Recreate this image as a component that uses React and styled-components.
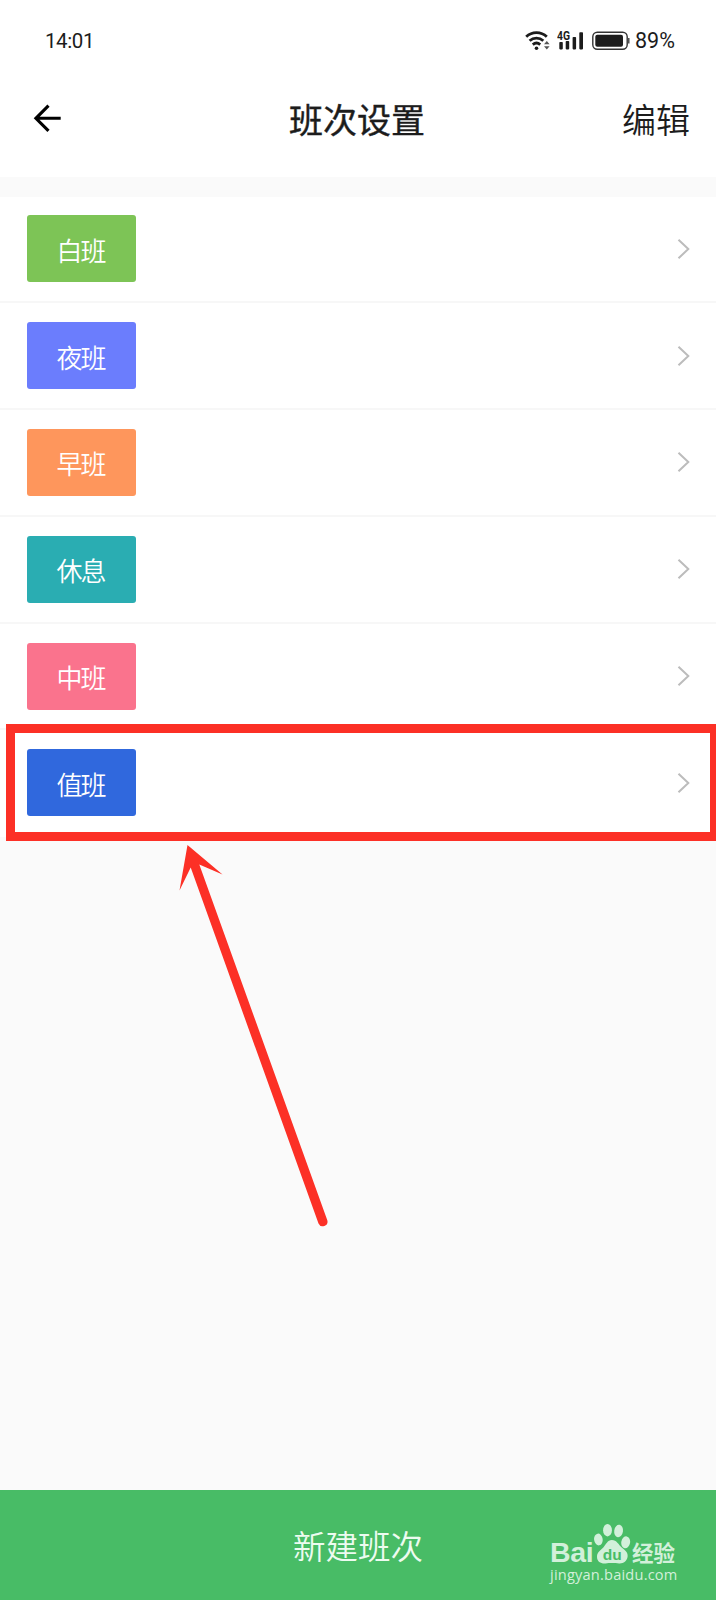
import React from "react";
import styled, { createGlobalStyle } from "styled-components";

const GlobalStyle = createGlobalStyle`
  * { box-sizing: border-box; }
  body { margin: 0; background: #fafafa; }
`;

const Screen = styled.div`
  position: relative;
  width: 716px;
  height: 1600px;
  overflow: hidden;
  display: flex;
  flex-direction: column;
  background: #fafafa;
  color: #1c1c1c;
  font-family: "Noto Sans CJK SC", sans-serif;
`;

const StatusBar = styled.div`
  flex: none;
  height: 82px;
  padding: 0 40px 0 45px;
  display: flex;
  align-items: center;
  justify-content: space-between;
  background: #fff;
  font: 400 21px/24px Roboto, sans-serif;
`;

const Clock = styled.span`
  font-size: 20.5px;
  letter-spacing: -0.4px;
`;

const StatusIcons = styled.div`
  display: flex;
  align-items: center;
  gap: 6.5px;
`;

const Battery = styled.span`
  margin-left: -1px;
  width: 41px;
  font-size: 21.5px;
`;

const Header = styled.header`
  flex: none;
  height: 95px;
  padding: 0 26px 22px;
  display: grid;
  grid-template-columns: 1fr auto 1fr;
  align-items: center;
  background: #fff;
`;

const BackButton = styled.button`
  display: flex;
  margin-left: 6px;
  padding: 0 0 1px;
  border: 0;
  background: none;
`;

const Title = styled.h1`
  margin: 0 2px 0 0;
  font-size: 34px;
  line-height: 50px;
  font-weight: 400;
  -webkit-text-stroke: 0.4px currentColor;
`;

const EditButton = styled.span`
  justify-self: end;
  font-size: 34px;
  line-height: 50px;
  font-weight: 350;
`;

const List = styled.main`
  flex: none;
  margin-top: 19.5px;
  background: #fff;
`;

const Row = styled.div`
  height: 106.8px;
  padding: 0 26px 0 27px;
  display: flex;
  align-items: center;
  justify-content: space-between;
  border-bottom: ${(p) => (p.$last ? "2px solid transparent" : "2px solid #f7f7f7")};
`;

const Tag = styled.div`
  width: 109px;
  height: 67px;
  padding: 2px 2px 0 0;
  display: flex;
  align-items: center;
  justify-content: center;
  border-radius: 3px;
  background: ${(p) => p.$color};
  color: #fff;
  font-size: 26px;
  line-height: 36px;
  font-weight: 350;
  letter-spacing: -2px;
`;

const CreateButton = styled.footer`
  flex: none;
  height: 110px;
  margin-top: auto;
  display: flex;
  align-items: center;
  justify-content: center;
  background: #48bc66;
  color: #edfbf0;
  font-size: 32.5px;
  line-height: 48px;
  font-weight: 350;
`;

const Highlight = styled.div`
  position: absolute;
  left: 6px;
  top: 724px;
  width: 713px;
  height: 117px;
  border: 9px solid #fc3026;
`;

const Pointer = styled.svg`
  position: absolute;
  left: 170px;
  top: 840px;
`;

const Watermark = styled.div`
  position: absolute;
  left: 549px;
  top: 1522px;
  width: 134px;
  color: #d2f0da;
`;

const Brand = styled.div`
  height: 42px;
  display: flex;
  align-items: flex-end;
`;

const BrandName = styled.span`
  width: 44px;
  padding-left: 1px;
  font: 700 28.5px/24px "Liberation Sans", sans-serif;
  letter-spacing: -0.3px;
`;

const BrandSuffix = styled.span`
  margin-left: 1px;
  white-space: nowrap;
  font-size: 21.5px;
  line-height: 24px;
  font-weight: 700;
`;

const Site = styled.div`
  margin-top: 0;
  padding-left: 1px;
  white-space: nowrap;
  font: 500 14.6px/20px "Open Sans", sans-serif;
  letter-spacing: 0.2px;
`;

const shifts = [
  ["白班", "#7dc456"],
  ["夜班", "#6b7dfd"],
  ["早班", "#fe965c"],
  ["休息", "#2aadb2"],
  ["中班", "#fa738d"],
  ["值班", "#3068dd"],
];

const WifiIcon = () => (
  <svg width="26" height="22" viewBox="0 0 26 22" fill="none" stroke="#1c1c1c" strokeWidth="2.8">
    <path d="M1.2 6.7C7 1.2 16 1.2 21.8 6.7M4.6 10.8C8.6 7.2 14.3 7.2 18.3 10.8M7.8 14.6C10 12.7 13 12.7 15.2 14.6" />
    <circle cx="11.5" cy="18.2" r="1.8" fill="#1c1c1c" stroke="none" />
    <path d="M19 14.2l2.8-3.2 2.8 3.2zM19 16.2h5.6L21.8 19.4z" fill="#555" stroke="none" />
  </svg>
);

const SignalIcon = () => (
  <svg width="28" height="22" viewBox="0 0 28 22" fill="#1c1c1c">
    <text x="0" y="9.5" fontFamily="Roboto, sans-serif" fontSize="12" fontWeight="700" textLength="13" lengthAdjust="spacingAndGlyphs">4G</text>
    <rect x="2.3" y="12" width="3.5" height="7.4" rx="0.8" />
    <rect x="8.7" y="11" width="3.5" height="8.4" rx="0.8" />
    <rect x="15.6" y="7" width="3.5" height="12.4" rx="0.8" />
    <rect x="22.3" y="2.2" width="3.7" height="17.2" rx="0.8" />
  </svg>
);

const BatteryIcon = () => (
  <svg width="38" height="20" viewBox="0 0 38 20">
    <rect x="0.8" y="1.2" width="34.4" height="17" rx="4.5" fill="none" stroke="#333" strokeWidth="1.4" />
    <rect x="3.3" y="3.7" width="27.7" height="12" rx="2" fill="#1c1c1c" />
    <path d="M36.8 7v5.6" stroke="#333" strokeWidth="1.3" />
  </svg>
);

const BackIcon = () => (
  <svg width="30" height="30" viewBox="0 0 30 30" fill="none" stroke="#000" strokeWidth="3.1">
    <path d="M28.7 15.3H4M16.5 2.7L3.9 15.3l12.6 12.6" />
  </svg>
);

const Chevron = () => (
  <svg width="13" height="22" viewBox="0 0 13 22" fill="none" stroke="#bcbcbc" strokeWidth="2">
    <path d="M1.5 1.8L11.3 11l-9.8 9.3" />
  </svg>
);

const Paw = () => (
  <svg width="38" height="42" viewBox="0 0 38 42" fill="#d2f0da">
    <ellipse cx="5.4" cy="17.5" rx="4.3" ry="5.9" transform="rotate(-8 5.4 17.5)" />
    <ellipse cx="14.5" cy="8.2" rx="4.4" ry="6.2" />
    <ellipse cx="25.6" cy="9" rx="4.4" ry="6.2" transform="rotate(8 25.6 9)" />
    <ellipse cx="32.7" cy="20.3" rx="4.4" ry="6" transform="rotate(10 32.7 20.3)" />
    <path d="M18.8 18c5 0 6.5 4.5 10.2 7.7 3.4 3 6.2 4.7 5.6 9-.7 4.5-4.3 7-8.5 6.700-3.800-.3-9-.5-13.500 0-4.500.4-8.600-1.500-8.600-6.700 0-4.500 3.500-6.500 6.300-9.200C13 22.500 14.500 18 18.800 18z" />
    <text x="9.8" y="38" fontFamily="Liberation Sans, sans-serif" fontSize="15.5" fontWeight="700" fill="#48bc66">du</text>
  </svg>
);

export default function App() {
  return (
    <Screen>
      <GlobalStyle />
      <StatusBar>
        <Clock>14:01</Clock>
        <StatusIcons>
          <WifiIcon />
          <SignalIcon />
          <BatteryIcon />
          <Battery>89%</Battery>
        </StatusIcons>
      </StatusBar>
      <Header>
        <BackButton aria-label="返回"><BackIcon /></BackButton>
        <Title>班次设置</Title>
        <EditButton>编辑</EditButton>
      </Header>
      <List>
        {shifts.map(([name, color], i) => (
          <Row key={name} $last={i === shifts.length - 1}>
            <Tag $color={color}>{name}</Tag>
            <Chevron />
          </Row>
        ))}
      </List>
      <CreateButton>新建班次</CreateButton>
      <Highlight />
      <Pointer width="165" height="395" viewBox="170 840 165 395" fill="#fc3026">
        <path d="M187.500 845L222.500 874.500L199.300 864.500L327.300 1220.300A4.700 4.700 0 0 1 318.500 1223.500L190.700 867.500L179.500 890.500Z" />
      </Pointer>
      <Watermark>
        <Brand>
          <BrandName>Bai</BrandName>
          <Paw />
          <BrandSuffix>经验</BrandSuffix>
        </Brand>
        <Site>jingyan.baidu.com</Site>
      </Watermark>
    </Screen>
  );
}
